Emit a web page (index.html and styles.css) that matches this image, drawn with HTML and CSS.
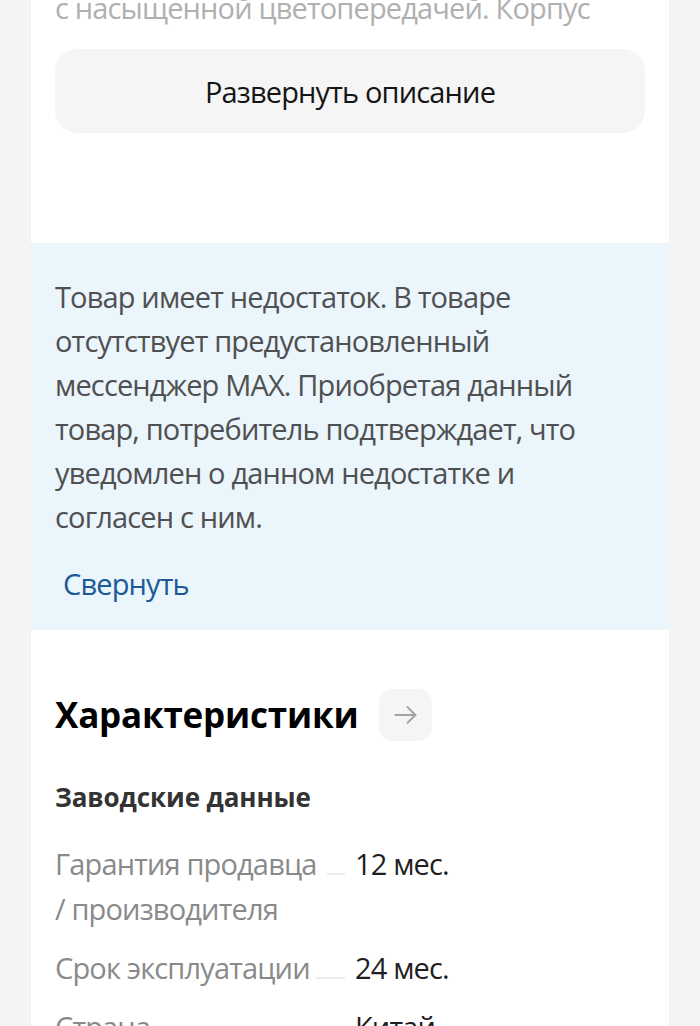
FILE: index.html
```html
<!DOCTYPE html>
<html lang="ru">
<head>
<meta charset="utf-8">
<title>Характеристики</title>
<link rel="stylesheet" href="styles.css">
</head>
<body>
<div class="page">
  <main class="card">
    <section class="description">
      <p class="description-text">с насыщенной цветопередачей. Корпус</p>
      <button class="expand-btn" type="button">Развернуть описание</button>
    </section>

    <section class="notice">
      <p class="notice-text">Товар имеет недостаток. В товаре<br>отсутствует предустановленный<br>мессенджер MAX. Приобретая данный<br>товар, потребитель подтверждает, что<br>уведомлен о данном недостатке и<br>согласен с ним.</p>
      <button class="collapse-link" type="button">Свернуть</button>
    </section>

    <section class="specs">
      <div class="specs-head">
        <h2 class="specs-title">Характеристики</h2>
        <button class="arrow-btn" type="button" aria-label="Все характеристики">
          <svg width="30" height="30" viewBox="0 0 24 24" fill="none" stroke="#a3a3a3" stroke-width="1.6" stroke-linecap="round" stroke-linejoin="round"><path d="M3.5 12h16"/><path d="M13.2 5.7 19.5 12 13.2 18.3"/></svg>
        </button>
      </div>
      <h3 class="group-title">Заводские данные</h3>
      <dl class="spec-list">
        <div class="spec-row">
          <dt class="spec-label"><span class="spec-name">Гарантия продавца / производителя</span><span class="leader"></span></dt>
          <dd class="spec-value">12 мес.</dd>
        </div>
        <div class="spec-row">
          <dt class="spec-label"><span class="spec-name">Срок эксплуатации</span><span class="leader"></span></dt>
          <dd class="spec-value">24 мес.</dd>
        </div>
        <div class="spec-row">
          <dt class="spec-label"><span class="spec-name">Страна-изготовитель</span><span class="leader"></span></dt>
          <dd class="spec-value">Китай</dd>
        </div>
      </dl>
    </section>
  </main>
</div>
</body>
</html>
```
FILE: styles.css
```css
html, body {
  margin: 0;
  padding: 0;
  background: #f4f4f4;
  overflow: hidden;
}

.page {
  padding: 0 31px;
}

.card {
  background: #ffffff;
  box-shadow: 0 0 1px rgba(0, 0, 0, 0.04);
}

.description-text,
.expand-btn,
.notice-text,
.collapse-link,
.spec-name,
.spec-value {
  font-family: "Open Sans", "Noto Sans", sans-serif;
  font-size: 29px;
  letter-spacing: -0.85px;
}

.description {
  padding: 0 24px 110px;
}

.description-text {
  margin: -14px 0 0;
  line-height: 44px;
  color: #b0b0b0;
}

.expand-btn {
  display: block;
  width: 100%;
  height: 84px;
  margin-top: 19px;
  border: 0;
  border-radius: 22px;
  background: #f5f5f5;
  color: #151515;
  cursor: pointer;
}

.notice {
  background: #eaf5fc;
  padding: 32px 24px 24px;
}

.notice-text {
  margin: 0;
  line-height: 44px;
  color: #505050;
}

.collapse-link {
  display: block;
  margin-top: 23px;
  padding: 0 0 0 8px;
  border: 0;
  background: none;
  line-height: 44px;
  color: #1c5a96;
  cursor: pointer;
}

.specs {
  padding: 59px 24px 40px;
}

.specs-head {
  display: flex;
  align-items: center;
  gap: 21px;
  height: 52px;
}

.specs-title {
  margin: 0;
  font-family: "Open Sans", "Noto Sans", sans-serif;
  font-weight: 700;
  font-size: 35px;
  line-height: 52px;
  color: #000;
  letter-spacing: -0.2px;
}

.arrow-btn {
  width: 53px;
  height: 52px;
  border: 0;
  border-radius: 14px;
  background: #f5f5f5;
  display: flex;
  align-items: center;
  justify-content: center;
  padding: 0;
}

.group-title {
  margin: 39px 0 0;
  font-family: "Open Sans", "Noto Sans", sans-serif;
  font-weight: 700;
  font-size: 26px;
  line-height: 34px;
  color: #333;
  letter-spacing: -0.1px;
}

.spec-list {
  margin: 27px 0 0;
  display: flex;
  flex-direction: column;
  gap: 14px;
}

.spec-row {
  display: flex;
  gap: 10px;
}

.spec-label {
  width: 290px;
  flex: none;
  display: flex;
  align-items: flex-start;
  margin: 0;
}

.spec-name {
  flex: 0 1 auto;
  line-height: 45px;
  color: #8a8a8a;
}

.leader {
  flex: 1 0 18px;
  height: 32px;
  margin-left: 6px;
  border-bottom: 2px solid #ececec;
}

.spec-value {
  margin: 0;
  line-height: 45px;
  color: #1f1f1f;
}
```
